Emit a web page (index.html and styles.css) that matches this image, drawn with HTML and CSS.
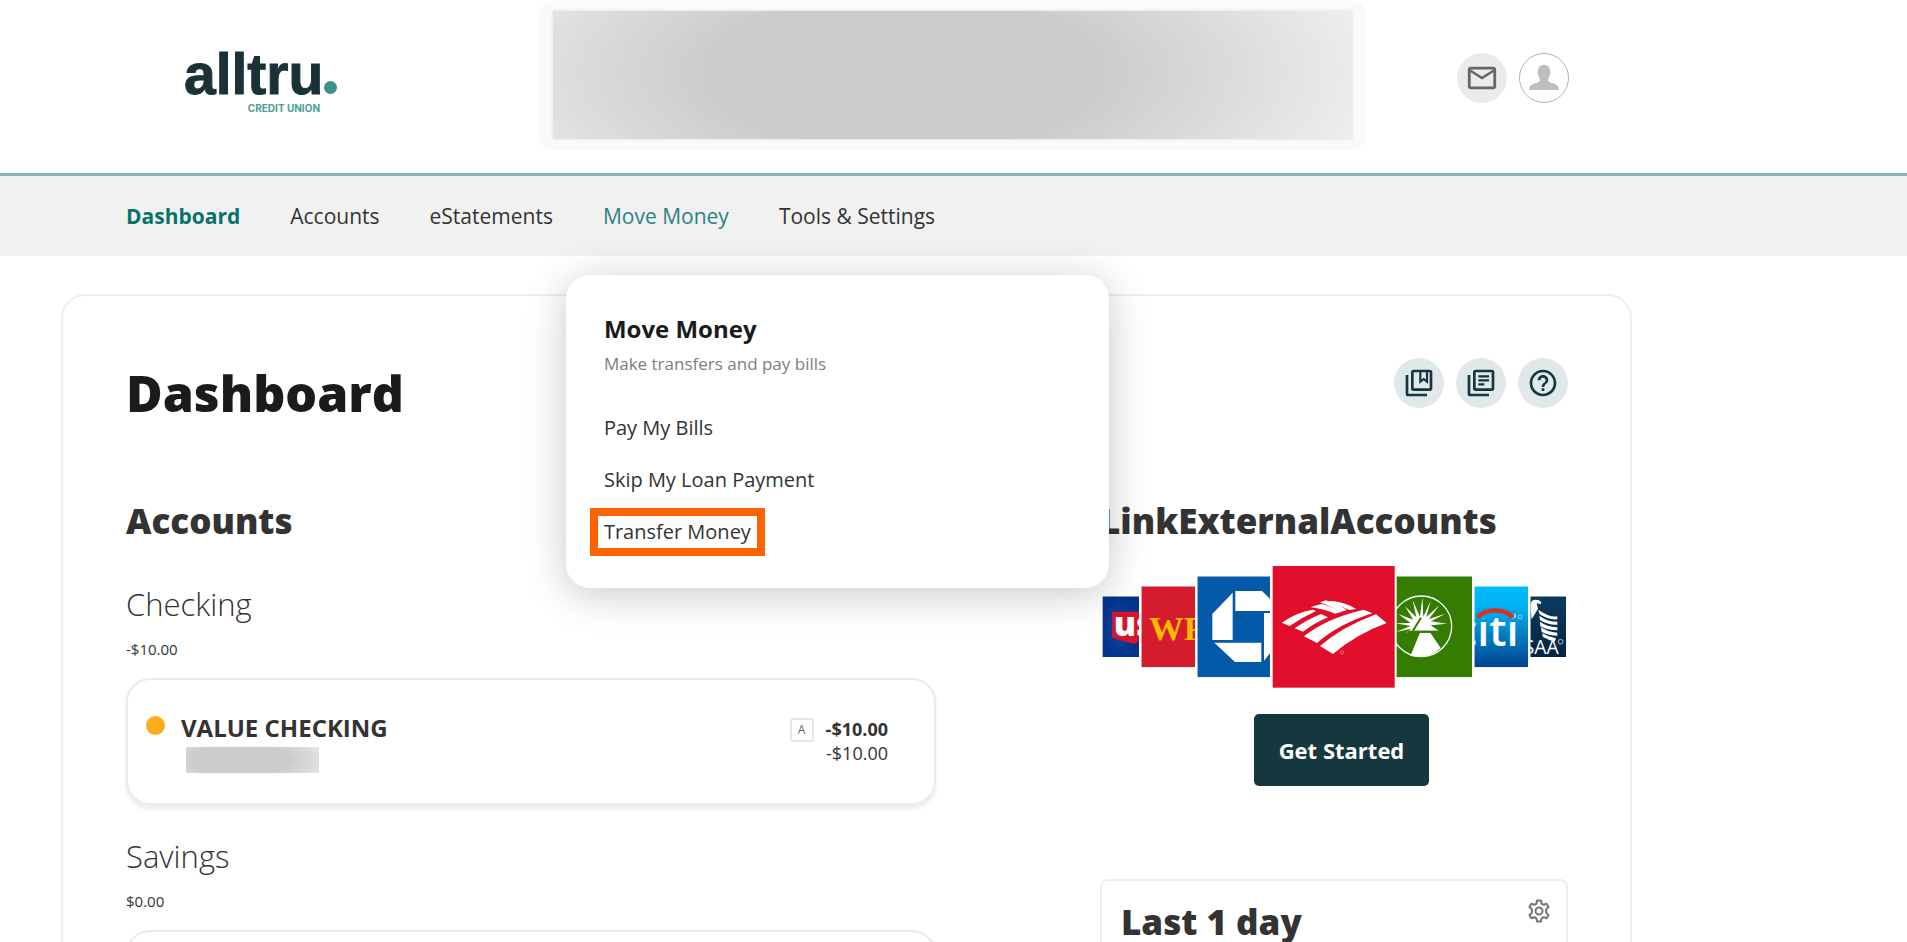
FILE: index.html
```html
<!DOCTYPE html>
<html lang="en">
<head>
<meta charset="utf-8">
<title>Alltru Credit Union - Dashboard</title>
<link rel="stylesheet" href="styles.css">
</head>
<body>
<div class="page">
  <header class="header">
    <a class="logo" href="#" aria-label="alltru credit union">
      <span class="logo-name">alltru<span class="logo-dot"></span></span>
      <span class="logo-sub">CREDIT UNION</span>
    </a>
    <div class="redacted-banner"><div class="redacted-fill"></div></div>
    <div class="header-actions">
      <button class="round mail" aria-label="Messages">
        <svg width="34" height="34" viewBox="0 0 24 24"><path fill="#666" d="M22 6c0-1.100-.9-2-2-2H4c-1.100 0-2 .9-2 2v12c0 1.100.9 2 2 2h16c1.100 0 2-.9 2-2V6zm-2 0l-8 5-8-5h16zm0 12H4V8l8 5 8-5v10z"/></svg>
      </button>
      <button class="round avatar" aria-label="Profile">
        <svg width="30" height="26" viewBox="0 0 30 26"><path fill="#bdbdbd" d="M15 0c4 0 6 2.500 6 6 0 1 .6 1.500.3 3-.2 1-.8 1-1 2-.4 1.600-1.300 2.500-1.300 4 0 2 2 2.500 5 3.300 3.500 1 5.500 2.500 6 6.700H0c.5-4.200 2.500-5.700 6-6.700 3-.8 5-1.300 5-3.300 0-1.500-.9-2.400-1.300-4-.2-1-.8-1-1-2C8.400 7.500 9 7 9 6c0-3.500 2-6 6-6z"/></svg>
      </button>
    </div>
  </header>

  <nav class="nav">
    <a class="nav-link current" href="#">Dashboard</a>
    <a class="nav-link" href="#">Accounts</a>
    <a class="nav-link" href="#">eStatements</a>
    <div class="nav-item">
      <a class="nav-link open" href="#">Move Money</a>
      <div class="menu">
        <h2 class="menu-title">Move Money</h2>
        <p class="menu-sub">Make transfers and pay bills</p>
        <a class="menu-link" href="#">Pay My Bills</a>
        <a class="menu-link" href="#">Skip My Loan Payment</a>
        <a class="menu-link marked" href="#">Transfer Money</a>
      </div>
    </div>
    <a class="nav-link" href="#">Tools &amp; Settings</a>
  </nav>

  <main class="panel">
    <div class="title-row">
      <h1 class="title">Dashboard</h1>
      <div class="tools">
        <button class="round tool" aria-label="Bookmarks">
          <svg width="32" height="32" viewBox="0 0 24 24" fill="none" stroke="#14363d" stroke-width="2"><rect x="7" y="3" width="14" height="14" rx="1"/><path d="M3 6v14q0 1 1 1h14"/><path stroke-width="1.600" d="M13 3v8l2.500-2 2.500 2V3"/></svg>
        </button>
        <button class="round tool" aria-label="Statements">
          <svg width="32" height="32" viewBox="0 0 24 24" fill="none" stroke="#14363d" stroke-width="2"><rect x="7" y="3" width="14" height="14" rx="1"/><path d="M3 6v14q0 1 1 1h14"/><path stroke-width="1.700" d="M10 7h8M10 10h8M10 13h4.500"/></svg>
        </button>
        <button class="round tool" aria-label="Help">
          <svg width="32" height="32" viewBox="0 0 24 24"><path fill="#14363d" d="M11 18h2v-2h-2v2zm1-16C6.480 2 2 6.480 2 12s4.480 10 10 10 10-4.480 10-10S17.520 2 12 2zm0 18c-4.410 0-8-3.590-8-8s3.590-8 8-8 8 3.590 8 8-3.590 8-8 8zm0-14c-2.210 0-4 1.790-4 4h2c0-1.100.9-2 2-2s2 .9 2 2c0 2-3 1.750-3 5h2c0-2.250 3-2.500 3-5 0-2.210-1.790-4-4-4z"/></svg>
        </button>
      </div>
    </div>

    <div class="columns">
      <section class="accounts">
        <h2 class="heading">Accounts</h2>
        <h3 class="group">Checking</h3>
        <p class="total">-$10.00</p>
        <article class="card">
          <span class="dot"></span>
          <div class="card-main">
            <h4 class="card-name">VALUE CHECKING</h4>
            <div class="redacted-number"></div>
          </div>
          <span class="badge">A</span>
          <div class="amounts"><strong>-$10.00</strong><span>-$10.00</span></div>
        </article>
        <h3 class="group">Savings</h3>
        <p class="total">$0.00</p>
        <article class="card"></article>
      </section>

      <aside class="side">
        <h2 class="heading">LinkExternalAccounts</h2>
        <svg class="banks" viewBox="0 0 1395 366" role="img" aria-label="Supported banks">
          <defs>
            <linearGradient id="citi" x2="0" y2="1"><stop offset="0" stop-color="#00bdfa"/><stop offset=".25" stop-color="#00b2f2"/><stop offset="1" stop-color="#00438d"/></linearGradient>
            <linearGradient id="usaa" x2="0" y2="1"><stop offset="0" stop-color="#0b3b60"/><stop offset="1" stop-color="#04243f"/></linearGradient>
            <radialGradient id="usb"><stop offset="0" stop-color="#0b4aa5"/><stop offset="1" stop-color="#04338a"/></radialGradient>
            <clipPath id="c1"><rect x="2" y="91" width="109" height="182"/></clipPath>
            <clipPath id="c2"><rect x="118" y="61" width="161" height="243"/></clipPath>
            <clipPath id="c3"><rect x="286" y="31" width="226" height="303"/></clipPath>
            <clipPath id="c5"><rect x="880" y="31" width="230" height="303"/></clipPath>
            <clipPath id="c6"><rect x="1117" y="61" width="161" height="243"/></clipPath>
            <clipPath id="c7"><rect x="1285" y="91" width="107" height="182"/></clipPath>
          </defs>
          <g clip-path="url(#c1)"><rect y="91" width="112" height="182" fill="url(#usb)"/><path fill="#d8142a" d="M30 137H112v88l-17 9-65-19z"/><text class="bank-us" x="35" y="210">us</text></g>
          <g clip-path="url(#c2)"><rect x="118" y="61" width="162" height="243" fill="#d51c2c"/><text class="bank-wells" x="141" y="222">WF</text></g>
          <g clip-path="url(#c3)"><rect x="286" y="31" width="218" height="303" fill="#0559a9"/><g fill="#fff"><path d="M400 75h80l32 31v29H400z"/><path d="M392 80v142h-61v-78z"/><path d="M337 230h141v58h-79z"/><path d="M486 141h30v106l-30 37z"/></g></g>
          <rect x="512" width="366" height="365" fill="#e00d2b"/>
          <g fill="#fff"><path d="M539 170Q590 136 633 131l9 4Q600 154 563 180z"/><path d="M578 187Q613 162 657 144l21 10Q639 170 603 197z"/><path d="M606 211Q670 158 785 131l26 11Q710 174 645 231z"/><path d="M654 240Q720 183 822 145l32 26Q763 204 693 264z"/><path d="M626 124q18-8 34-10 35 9 58 24l-19 5q-36-15-73-19z"/><path d="M654 109l17-6q40 12 64 29l-19 6q-28-17-62-29z"/><path d="M690 105q42 4 72 24l-20 3q-32-17-70-25z"/></g>
          <circle cx="720" cy="259" r="5" fill="none" stroke="#f4a0ab" stroke-width="2"/>
          <g clip-path="url(#c5)"><rect x="884" y="31" width="226" height="303" fill="#357c02"/><circle cx="958" cy="181" r="91" fill="none" stroke="#fff" stroke-width="4"/>
            <path fill="#fff" d="M925 270l29-70h31l31 46q-35 34-91 24zM928 194h82l-24-16 49-5-48-7 43-23-49 16 31-41-39 35 13-49-22 48-3-58-7 58-22-49 11 51-34-33 25 40-45-17 37 27-45 1 45 8-45 18 47-10-16 12 28-10z"/><path stroke="#357c02" stroke-width="6" d="M918 197h98M933 194l24-39"/></g>
          <g clip-path="url(#c6)"><rect x="1117" y="61" width="162" height="243" fill="url(#citi)"/><text class="bank-citi" x="1061" y="239">citi</text><path fill="#00a5e6" d="M1127 126h110v31h-110z"/><path fill="none" stroke="#e12b22" stroke-width="13" d="M1127 154q18-21 53-21 33 0 52 21"/><circle cx="1254" cy="153" r="6" fill="none" stroke="#bfe3f5" stroke-width="2"/></g>
          <g clip-path="url(#c7)"><rect x="1285" y="91" width="108" height="182" fill="url(#usaa)"/><path fill="#fff" d="M1285 120l4-15q15-8 29 2l-2 8-12-3 4 16-19 32zM1309 131q34 24 57 20v9q-26 3-53-15zM1312 149q22 18 54 18v9q-30 1-52-14zM1314 167q20 15 52 17v9q-30 0-51-12zM1317 184q20 14 49 16v9q-26 0-47-11zM1321 202q18 11 41 15l-4 10q-20-6-36-15z"/><text class="bank-usaa" x="1223" y="264">USAA</text><circle cx="1376" cy="227" r="7" fill="none" stroke="#fff" stroke-width="2"/></g>
        </svg>
        <button class="start">Get Started</button>
        <section class="summary">
          <h2 class="heading">Last 1 day</h2>
          <button class="gear" aria-label="Settings">
            <svg width="22" height="24" viewBox="0 0 22 24" fill="none" stroke="#777" stroke-width="2"><path stroke-linejoin="round" d="M9 1.500h4l.6 3.200 1.900 1.100 3.100-1.100 2 3.400-2.500 2.200v3.400l2.500 2.200-2 3.400-3.100-1.100-1.900 1.100-.6 3.200H9l-.6-3.200-1.900-1.100-3.100 1.100-2-3.400 2.500-2.200v-3.400L1.400 8.100l2-3.400 3.100 1.100 1.900-1.100z"/><circle cx="11" cy="12" r="3.500"/></svg>
          </button>
        </section>
      </aside>
    </div>
  </main>
</div>
</body>
</html>
```
FILE: styles.css
```css
* { box-sizing: border-box; }
body { margin: 0; background: #fff; color: #333; font-family: "Open Sans", "Noto Sans", sans-serif; font-size: 18px; }
h1, h2, h3, h4, p { margin: 0; }
a { color: inherit; text-decoration: none; }
button { font: inherit; border: 0; padding: 0; cursor: pointer; }
svg { display: block; }
.page { height: 100vh; overflow: hidden; }

.header { display: flex; align-items: flex-start; height: 173px; padding: 1px 338px 0 184px; }
.logo { display: flex; flex-direction: column; width: 152px; padding-top: 45px; color: #1a3236; }
.logo-name { display: flex; align-items: baseline; gap: 1px; font: bold 57px/56px "Liberation Sans", Arial, sans-serif; -webkit-text-stroke: 1px #1a3236; }
.logo-dot { flex: none; width: 13px; height: 13px; border-radius: 50%; background: #3b9187; }
.logo-sub { padding-right: 16px; text-align: right; font: bold 10px/12px Inter, sans-serif; color: #4c9c93; }
.redacted-banner { flex: 1; height: 149px; margin: 0 90px 0 202px; padding: 10px 15px; border-radius: 16px; background: #fafafa; }
.redacted-fill { height: 128px; background: radial-gradient(ellipse 58% 150% at 44% 48%, #cbcbcb 40%, #dadada 68%, #ededed 100%); box-shadow: 0 0 3px #ddd; }
.header-actions { display: flex; gap: 12px; padding-top: 52px; }
.round { display: flex; align-items: center; justify-content: center; width: 50px; height: 50px; border-radius: 50%; }
.mail { background: #ebebeb; }
.avatar { background: #fff; border: 1px solid #aab4b6; }

.nav { display: flex; align-items: center; gap: 50px; height: 83px; padding-left: 126px; border-top: 3px solid #85b5b5; background: #f1f1f1; font-size: 21px; line-height: 28px; }
.nav-item { position: relative; }
.current { font-weight: 700; color: #0b716b; }
.open { color: #2c8380; }
.menu { position: absolute; z-index: 2; top: 73px; left: -37px; display: flex; flex-direction: column; align-items: flex-start; width: 543px; padding: 37px 38px 32px; border-radius: 24px; background: #fff; box-shadow: 0 6px 40px rgba(0, 0, 0, .22); }
.menu-title { font-size: 24px; line-height: 34px; color: #1b1b1b; }
.menu-sub { padding-bottom: 20px; font-size: 17px; line-height: 36px; color: #7d7d7d; }
.menu-link { font-size: 20px; line-height: 32px; padding: 10px 0; }
.marked { margin: 2px 0 0 -14px; padding: 0 6px; border: 8px solid #ff6200; }

.panel { margin: 38px 275px 0 61px; padding: 61px 62px 64px 63px; border: 2px solid #eee; border-radius: 24px; min-height: 700px; }
.title-row { display: flex; justify-content: space-between; }
.title { font-size: 50px; line-height: 72px; font-weight: 800; color: #1b1b1b; }
.tools { display: flex; gap: 12px; padding-top: 1px; }
.tool { background: #e1e8ea; }
.columns { display: grid; grid-template-columns: 810fr 468fr; column-gap: 164px; padding-top: 68px; }
.heading { font-size: 35px; line-height: 48px; font-weight: 800; white-space: nowrap; }
.group { padding-top: 37px; font-size: 31px; line-height: 44px; font-weight: 300; }
.total { padding: 9px 0 15px; font-size: 15px; line-height: 28px; }
.card { display: flex; align-items: flex-start; min-height: 127px; padding: 31px 46px 0 18px; border: 2px solid #eaeaea; border-radius: 24px; box-shadow: 0 4px 4px rgba(0, 0, 0, .08); }
.card + .group { padding-top: 29px; }
.dot { width: 19px; height: 19px; margin: 5px 16px 0 0; border-radius: 50%; background: #fdae1a; }
.card-main { flex: 1; }
.card-name { font-size: 24px; line-height: 34px; font-weight: 700; }
.redacted-number { width: 133px; height: 26px; margin: 2px 0 0 5px; background: radial-gradient(ellipse 65% 120% at 42% 50%, #cbcbcb 55%, #e6e6e6 100%); }
.badge { width: 24px; height: 24px; margin: 7px 12px 0 0; border: 2px solid #e6e6e6; border-radius: 3px; font-size: 12px; line-height: 20px; text-align: center; color: #666; }
.amounts { display: flex; flex-direction: column; align-items: flex-end; padding-top: 6px; font-size: 18px; line-height: 24px; }
.banks { width: 465px; height: 122px; margin: 21px 0 26px 2px; }
.bank-us { font: 800 100px "Open Sans", sans-serif; fill: #fff; }
.bank-wells { font: bold 104px "Liberation Serif", serif; fill: #ffb900; }
.bank-citi { font: 600 130px "Open Sans", sans-serif; fill: #fff; }
.bank-usaa { font: 58px "Open Sans", sans-serif; fill: #fff; }
.start { display: block; width: 175px; height: 72px; margin: 0 auto 93px 154px; border-radius: 5px; background: #14383e; color: #fff; font-size: 22px; font-weight: 700; }
.summary { display: flex; justify-content: space-between; align-items: flex-start; min-height: 160px; padding: 17px 16px 0 19px; border: 2px solid #eee; border-radius: 8px; }
.gear { background: none; margin-top: 1px; }
```
